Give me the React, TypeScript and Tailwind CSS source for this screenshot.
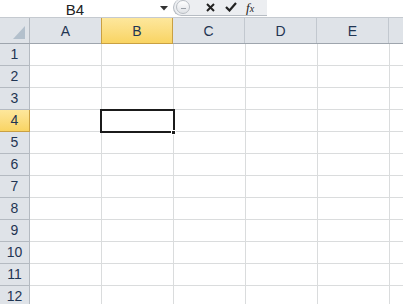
import React from "react";

const cols = ["A", "B", "C", "D", "E"];
const rows = [1, 2, 3, 4, 5, 6, 7, 8, 9, 10, 11, 12];

const App = () => {
    return (
        <div className="w-[403px] h-[304px] overflow-hidden bg-white" style={{ fontFamily: '"Liberation Sans", Arial, sans-serif' }}>
            {/* Formula bar */}
            <div className="flex h-[18px] border-b border-[#c5cad0] bg-white">
                <div className="w-[173px] flex items-center relative">
                    <span className="w-[150px] text-center text-[15px] leading-none text-[#222] pt-[1px]">B4</span>
                    <svg className="absolute left-[160px] top-[6px]" width="8" height="5" viewBox="0 0 8 5">
                        <path d="M0 0h8L4 4.5z" fill="#333" />
                    </svg>
                </div>
                <div className="w-[94px] h-[17px] flex items-center bg-[#eceef1] border-l border-b border-[#b6bcc3] rounded-bl-[10px] rounded-tl-[10px] -mt-[1px]">
                    <div className="ml-[2px] w-[14px] h-[14px] rounded-full border border-[#b8bdc3] bg-gradient-to-b from-white to-[#dfe2e6] flex items-center justify-center">
                        <div className="w-[5px] h-[1px] bg-[#9aa0a7] mt-[2px]" />
                    </div>
                    <svg className="ml-[16px]" width="9" height="9" viewBox="0 0 9 9">
                        <path d="M1 1l7 7M8 1L1 8" stroke="#222" strokeWidth="2" />
                    </svg>
                    <svg className="ml-[10px]" width="12" height="10" viewBox="0 0 12 10">
                        <path d="M1 5l3.5 3.5L11 1" stroke="#222" strokeWidth="2.2" fill="none" />
                    </svg>
                    <span className="ml-[9px] text-[13px] leading-none text-[#222] italic" style={{ fontFamily: '"Liberation Serif", serif' }}>
                        f<span className="text-[10px]">x</span>
                    </span>
                </div>
            </div>

            {/* Column headers */}
            <div className="flex h-[26px] bg-[#dfe3e8] border-b border-[#9ea5ad]">
                <div className="w-[30px] shrink-0 border-r border-[#b4bac1] relative">
                    <svg className="absolute left-[13px] top-[8px]" width="12" height="13" viewBox="0 0 12 13">
                        <path d="M12 0V13H0z" fill="#b3c0cc" />
                    </svg>
                </div>
                {cols.map((c) => (
                    <div
                        key={c}
                        className={
                            c === "B"
                                ? "w-[72px] shrink-0 flex items-center justify-center text-[14px] text-[#1f3553] bg-gradient-to-b from-[#fde79c] to-[#f9d462] border-x border-b border-[#c9a043] -mb-[1px] -ml-[1px] pt-[1px]"
                                : "w-[72px] shrink-0 flex items-center justify-center text-[14px] text-[#1f3553] border-r border-[#c2c8cf] pt-[1px]"
                        }
                    >
                        {c}
                    </div>
                ))}
                <div className="flex-1" />
            </div>

            {/* Grid */}
            <div className="relative">
                {rows.map((r) => (
                    <div key={r} className="flex h-[22px]">
                        <div
                            className={
                                r === 4
                                    ? "w-[30px] shrink-0 flex items-center justify-center text-[14px] text-[#1f3553] bg-gradient-to-b from-[#fde79c] to-[#f9d462] border-r border-b border-[#c9a043]"
                                    : "w-[30px] shrink-0 flex items-center justify-center text-[14px] text-[#1f3553] bg-[#dfe3e8] border-r border-b border-[#b4bac1]"
                            }
                        >
                            {r}
                        </div>
                        {cols.map((c) => (
                            <div key={c} className="w-[72px] shrink-0 border-r border-b border-[#dadcdd]" />
                        ))}
                        <div className="flex-1 border-b border-[#dadcdd]" />
                    </div>
                ))}
                {/* Selected cell */}
                <div className="absolute left-[100px] top-[65px] w-[75px] h-[24px] border-2 border-[#1b1b1b]" />
                <div className="absolute left-[171px] top-[86px] w-[5px] h-[5px] bg-[#1b1b1b] border border-white" />
            </div>
        </div>
    );
};

export default App;
